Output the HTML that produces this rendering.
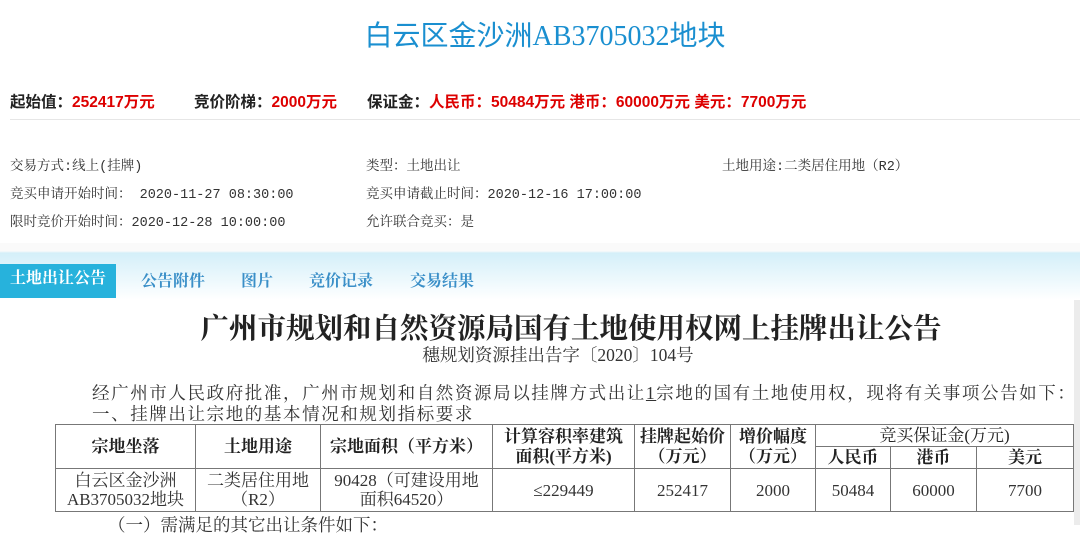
<!DOCTYPE html><html><head><meta charset="utf-8"><style>
body{margin:0;width:1080px;height:525px;overflow:hidden;background:#fff;position:relative;font-family:"Liberation Sans","Noto Sans CJK SC",sans-serif;}
.a{position:absolute;white-space:nowrap}
.t{font-size:13.5px;color:#333;font-family:"Liberation Mono","Noto Serif CJK SC",monospace}
.s{font-family:"Liberation Serif","Noto Serif CJK SC",serif}
table{position:absolute;left:55px;top:424px;border-collapse:collapse;font-family:"Liberation Serif","Noto Serif CJK SC",serif;font-size:17px;color:#333;table-layout:fixed}
td{border:1.5px solid #777;text-align:center;padding:0;line-height:19px;white-space:nowrap}
th{border:1.5px solid #777;font-weight:bold;padding:0;line-height:20px;font-size:17px;color:#222;white-space:nowrap}
</style></head><body>
<div class="a" style="left:0;top:14px;width:1090px;text-align:center;font-size:28px;color:#1a8fd0;font-family:'Liberation Serif','Noto Sans CJK SC',sans-serif">白云区金沙洲AB3705032地块</div>
<div class="a" style="left:10px;top:90px;font-size:15.5px;font-weight:bold;color:#222">起始值：<span style="color:#d00">252417万元</span></div>
<div class="a" style="left:194px;top:90px;font-size:15.5px;font-weight:bold;color:#222">竞价阶梯：<span style="color:#d00">2000万元</span></div>
<div class="a" style="left:367px;top:90px;font-size:15.5px;font-weight:bold;color:#222">保证金：<span style="color:#d00">人民币：50484万元 港币：60000万元 美元：7700万元</span></div>
<div class="a" style="left:10px;top:119px;width:1070px;height:1px;background:#e6e6e6"></div>
<div class="a t" style="left:10px;top:154px">交易方式:线上(挂牌)</div>
<div class="a t" style="left:10px;top:182px">竞买申请开始时间： 2020-11-27 08:30:00</div>
<div class="a t" style="left:10px;top:210px">限时竞价开始时间：2020-12-28 10:00:00</div>
<div class="a t" style="left:366px;top:154px">类型：土地出让</div>
<div class="a t" style="left:366px;top:182px">竞买申请截止时间：2020-12-16 17:00:00</div>
<div class="a t" style="left:366px;top:210px">允许联合竞买：是</div>
<div class="a t" style="left:722px;top:154px">土地用途:二类居住用地（R2）</div>
<div class="a" style="left:0;top:243px;width:1080px;height:57px;background:linear-gradient(#fafafa 0,#fafafa 8px,#d4eff9 10px,#ffffff 57px)"></div>
<div class="a s" style="left:0;top:264px;width:116px;height:34px;background:#27b2dc;color:#fff;font-size:16px;font-weight:bold;line-height:30px;text-align:center">土地出让公告</div>
<div class="a s" style="left:141px;top:268px;font-size:16px;font-weight:bold;color:#3a8fc8">公告附件</div>
<div class="a s" style="left:241px;top:268px;font-size:16px;font-weight:bold;color:#3a8fc8">图片</div>
<div class="a s" style="left:309px;top:268px;font-size:16px;font-weight:bold;color:#3a8fc8">竞价记录</div>
<div class="a s" style="left:410px;top:268px;font-size:16px;font-weight:bold;color:#3a8fc8">交易结果</div>
<div class="a" style="left:1074px;top:300px;width:6px;height:225px;background:#ececec"></div>
<div class="a s" style="left:0;top:306px;width:1142px;text-align:center;font-size:28.5px;font-weight:bold;color:#222">广州市规划和自然资源局国有土地使用权网上挂牌出让公告</div>
<div class="a s" style="left:0;top:342px;width:1116px;text-align:center;font-size:17.5px;color:#333">穗规划资源挂出告字〔2020〕104号</div>
<div class="a s" style="left:92px;top:380px;font-size:17.5px;color:#333;letter-spacing:1.6px">经广州市人民政府批准，广州市规划和自然资源局以挂牌方式出让<u>1</u>宗地的国有土地使用权，现将有关事项公告如下：</div>
<div class="a s" style="left:92px;top:401px;font-size:17.5px;color:#333;letter-spacing:1.6px">一、挂牌出让宗地的基本情况和规划指标要求</div>
<table>
<colgroup><col style="width:140px"><col style="width:125px"><col style="width:172px"><col style="width:142px"><col style="width:96px"><col style="width:85px"><col style="width:75px"><col style="width:86px"><col style="width:97px"></colgroup>
<tr style="height:22px"><th rowspan="2">宗地坐落</th><th rowspan="2">土地用途</th><th rowspan="2">宗地面积（平方米）</th><th rowspan="2">计算容积率建筑<br>面积(平方米)</th><th rowspan="2">挂牌起始价<br>（万元）</th><th rowspan="2">增价幅度<br>（万元）</th><th colspan="3" style="font-weight:normal">竞买保证金(万元)</th></tr>
<tr style="height:22px"><th>人民币</th><th>港币</th><th>美元</th></tr>
<tr style="height:43px"><td>白云区金沙洲<br>AB3705032地块</td><td>二类居住用地<br>（R2）</td><td>90428（可建设用地<br>面积64520）</td><td>≤229449</td><td>252417</td><td>2000</td><td>50484</td><td>60000</td><td>7700</td></tr>
</table>
<div class="a s" style="left:108px;top:512px;font-size:17.5px;color:#333">（一）需满足的其它出让条件如下：</div>
</body></html>
